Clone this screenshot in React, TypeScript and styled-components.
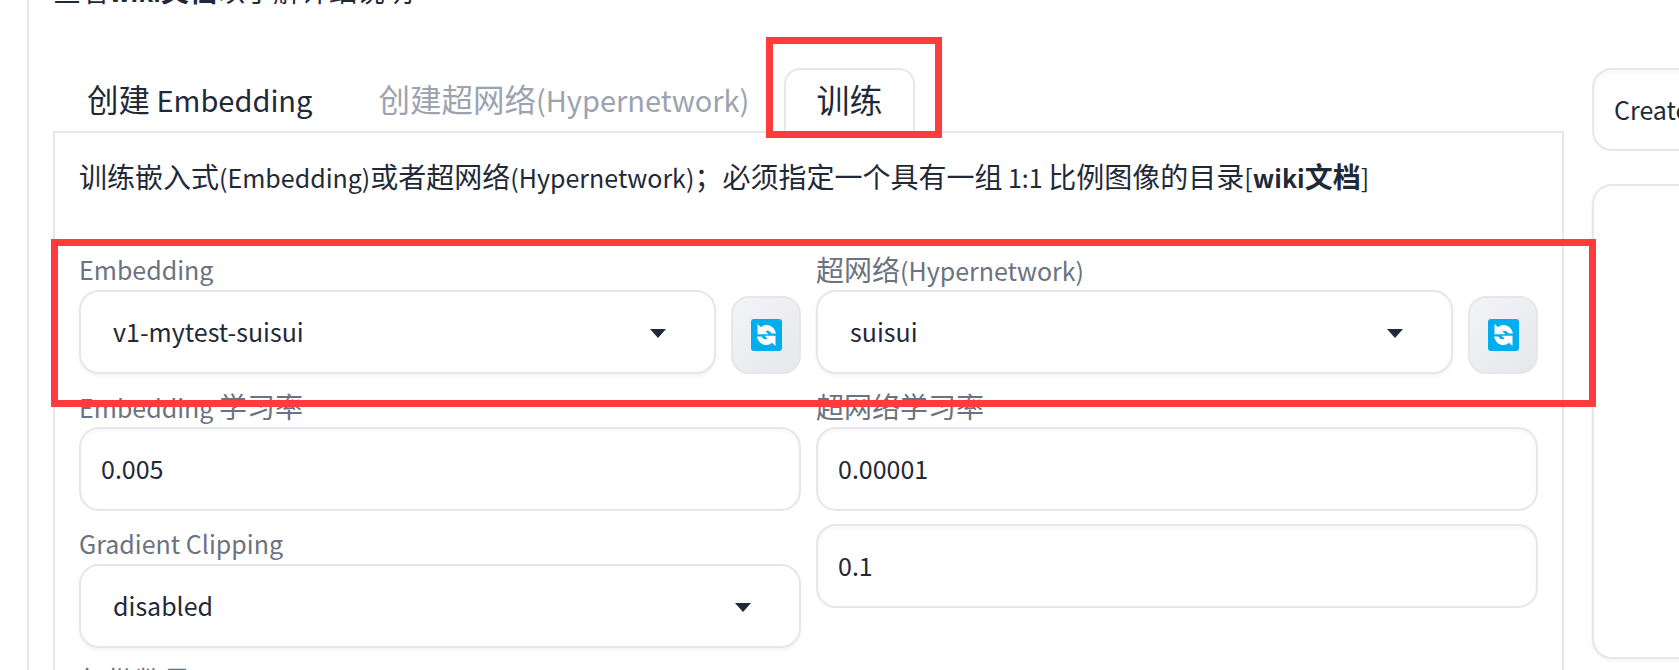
import React from "react";
import styled, { createGlobalStyle } from "styled-components";

const Global = createGlobalStyle`
  html, body { margin: 0; padding: 0; background: #fff; overflow: hidden; }
  body { font-family: "Noto Sans CJK SC", "Noto Sans", sans-serif; color: #1f2937; }
`;

const Han = styled.span`
  font-size: 28px;
`;

const Page = styled.div`
  position: relative;
  width: 1679px;
  height: 670px;
  overflow: hidden;
  background: #fff;
`;

const Frame = styled.div`
  margin-left: 27px;
  width: 1700px;
  height: 800px;
  border-left: 2px solid #e5e7eb;
  padding-left: 24px;
  box-sizing: border-box;
  margin-top: -26px;
`;

const Intro = styled.div`
  font-size: 25px;
  line-height: 32px;
  height: 32px;
  white-space: nowrap;
  b { font-weight: 700; }
`;

const Main = styled.div`
  display: flex;
  gap: 28px;
  margin-top: 62px;
  align-items: flex-start;
`;

const LeftCol = styled.div`
  width: 1511px;
  flex: none;
`;

const Tabs = styled.div`
  display: flex;
  height: 64px;
  margin-bottom: -1px;
  position: relative;
`;

const Tab = styled.div<{ $state: "idle" | "muted" | "active" }>`
  box-sizing: border-box;
  height: ${(p) => (p.$state === "active" ? "65px" : "64px")};
  font-size: 29px;
  line-height: 61px;
  padding: 0 ${(p) => (p.$state === "idle" ? "34px" : "32px")};
  white-space: nowrap;
  color: ${(p) => (p.$state === "muted" ? "#9ca3af" : "#1f2937")};
  ${Han} { font-size: ${(p) => (p.$state === "active" ? "33px" : "31.5px")}; }
  ${(p) =>
    p.$state === "active"
      ? `border: 2px solid #e5e7eb; border-bottom: none; border-radius: 16px 16px 0 0; background: #fff; z-index: 1; line-height: 59px; width: 131px; padding: 0 30px; margin-left: 3px;`
      : ""}
`;

const Panel = styled.div`
  box-sizing: border-box;
  border: 2px solid #e5e7eb;
  padding: 0 24px;
  height: 700px;
`;

const Description = styled.div`
  height: 117px;
  padding-top: 23px;
  box-sizing: border-box;
  font-size: 25px;
  line-height: 40px;
  white-space: nowrap;
  b { font-weight: 700; }
`;

const FormGrid = styled.div`
  display: grid;
  grid-template-columns: 722px 722px;
  column-gap: 15px;
  row-gap: 13px;
  align-items: start;
`;

const Field = styled.div`
  display: flex;
  flex-direction: column;
`;

const Label = styled.div`
  height: 40px;
  line-height: 38px;
  font-size: 25px;
  color: #6b7280;
  white-space: nowrap;
`;

const PickerRow = styled.div`
  display: flex;
  gap: 15px;
  align-items: flex-end;
  height: 84px;
`;

const Control = styled.div<{ $grow?: boolean }>`
  box-sizing: border-box;
  height: 84px;
  border: 2px solid #e5e7eb;
  border-radius: 20px;
  background: #fff;
  box-shadow: 0 2px 4px rgba(0, 0, 0, 0.05);
  display: flex;
  align-items: center;
  font-size: 25px;
  color: #1f2937;
  ${(p) => (p.$grow ? "flex: 1; min-width: 0;" : "")}
`;

const SelectBox = styled(Control)`
  justify-content: space-between;
  padding: 0 48px 3px 32px;
`;

const InputBox = styled(Control)`
  padding: 0 20px 3px;
  box-shadow: inset 0 2px 4px rgba(0, 0, 0, 0.04);
`;

const Caret = styled.span`
  width: 0;
  height: 0;
  border-left: 8px solid transparent;
  border-right: 8px solid transparent;
  border-top: 9px solid #1f2937;
  margin-top: 6px;
`;

const IconButton = styled.div`
  width: 70px;
  height: 78px;
  flex: none;
  box-sizing: border-box;
  border: 2px solid #e5e7eb;
  border-radius: 18px;
  background: linear-gradient(135deg, #f3f4f6, #e5e7eb);
  display: flex;
  align-items: center;
  justify-content: center;
`;

const RightCol = styled.div`
  flex: 1;
  display: flex;
  flex-direction: column;
  gap: 33px;
`;

const ActionCard = styled.div`
  box-sizing: border-box;
  height: 83px;
  border: 2px solid #e5e7eb;
  border-radius: 20px;
  box-shadow: inset 0 2px 6px rgba(0, 0, 0, 0.04);
  font-size: 25px;
  line-height: 78px;
  padding-left: 20px;
  white-space: nowrap;
`;

const OutputCard = styled.div`
  box-sizing: border-box;
  height: 475px;
  border: 2px solid #e5e7eb;
  border-radius: 20px;
  box-shadow: 0 2px 4px rgba(0, 0, 0, 0.05);
`;

const Annotation = styled.div<{ $x: number; $y: number; $w: number; $h: number }>`
  position: absolute;
  left: ${(p) => p.$x}px;
  top: ${(p) => p.$y}px;
  width: ${(p) => p.$w}px;
  height: ${(p) => p.$h}px;
  box-sizing: border-box;
  border: 7px solid #ff3b3b;
  pointer-events: none;
  z-index: 5;
`;

const ARROW = "M6.500 5L10 8.200C14.500 4 23 5.500 25 14.500H20.500C19 11.500 16 11 14.500 12.500L17.500 15.200H6.500Z";

const RefreshIcon = () => (
  <svg width="31" height="32" viewBox="0 0 31 32" aria-hidden="true">
    <rect width="31" height="32" rx="3" fill="#00adef" />
    <path d={ARROW} fill="#fff" />
    <path d={ARROW} transform="rotate(180 15.5 16)" fill="#fff" />
  </svg>
);

export default function App() {
  return (
    <Page>
      <Global />
      <Frame>
        <Intro>
          <Han>查看</Han>
          <b>
            wiki<Han>文档</Han>
          </b>
          <Han>以了解详细说明</Han>
        </Intro>
        <Main>
          <LeftCol>
            <Tabs>
              <Tab $state="idle">
                <Han>创建</Han> Embedding
              </Tab>
              <Tab $state="muted">
                <Han>创建超网络</Han>(Hypernetwork)
              </Tab>
              <Tab $state="active">
                <Han>训练</Han>
              </Tab>
            </Tabs>
            <Panel>
              <Description>
                <Han>训练嵌入式</Han>(Embedding)<Han>或者超网络</Han>(Hypernetwork)<Han>；必须指定一个具有一组</Han> 1:1{" "}
                <Han>比例图像的目录</Han>[
                <b>
                  wiki<Han>文档</Han>
                </b>
                ]
              </Description>
              <FormGrid>
                <Field>
                  <Label>Embedding</Label>
                  <PickerRow>
                    <SelectBox $grow>
                      v1-mytest-suisui
                      <Caret />
                    </SelectBox>
                    <IconButton>
                      <RefreshIcon />
                    </IconButton>
                  </PickerRow>
                </Field>
                <Field>
                  <Label>
                    <Han>超网络</Han>(Hypernetwork)
                  </Label>
                  <PickerRow>
                    <SelectBox $grow>
                      suisui
                      <Caret />
                    </SelectBox>
                    <IconButton>
                      <RefreshIcon />
                    </IconButton>
                  </PickerRow>
                </Field>
                <Field>
                  <Label>
                    Embedding <Han>学习率</Han>
                  </Label>
                  <InputBox>0.005</InputBox>
                </Field>
                <Field>
                  <Label>
                    <Han>超网络学习率</Han>
                  </Label>
                  <InputBox>0.00001</InputBox>
                </Field>
                <Field>
                  <Label>Gradient Clipping</Label>
                  <SelectBox>
                    disabled
                    <Caret />
                  </SelectBox>
                </Field>
                <Field>
                  <InputBox>0.1</InputBox>
                </Field>
                <Field>
                  <Label>
                    <Han>每批数量</Han>
                  </Label>
                </Field>
              </FormGrid>
            </Panel>
          </LeftCol>
          <RightCol>
            <ActionCard>Create embedding</ActionCard>
            <OutputCard />
          </RightCol>
        </Main>
      </Frame>
      <Annotation $x={766} $y={37} $w={176} $h={101} />
      <Annotation $x={51} $y={239} $w={1545} $h={168} />
    </Page>
  );
}
